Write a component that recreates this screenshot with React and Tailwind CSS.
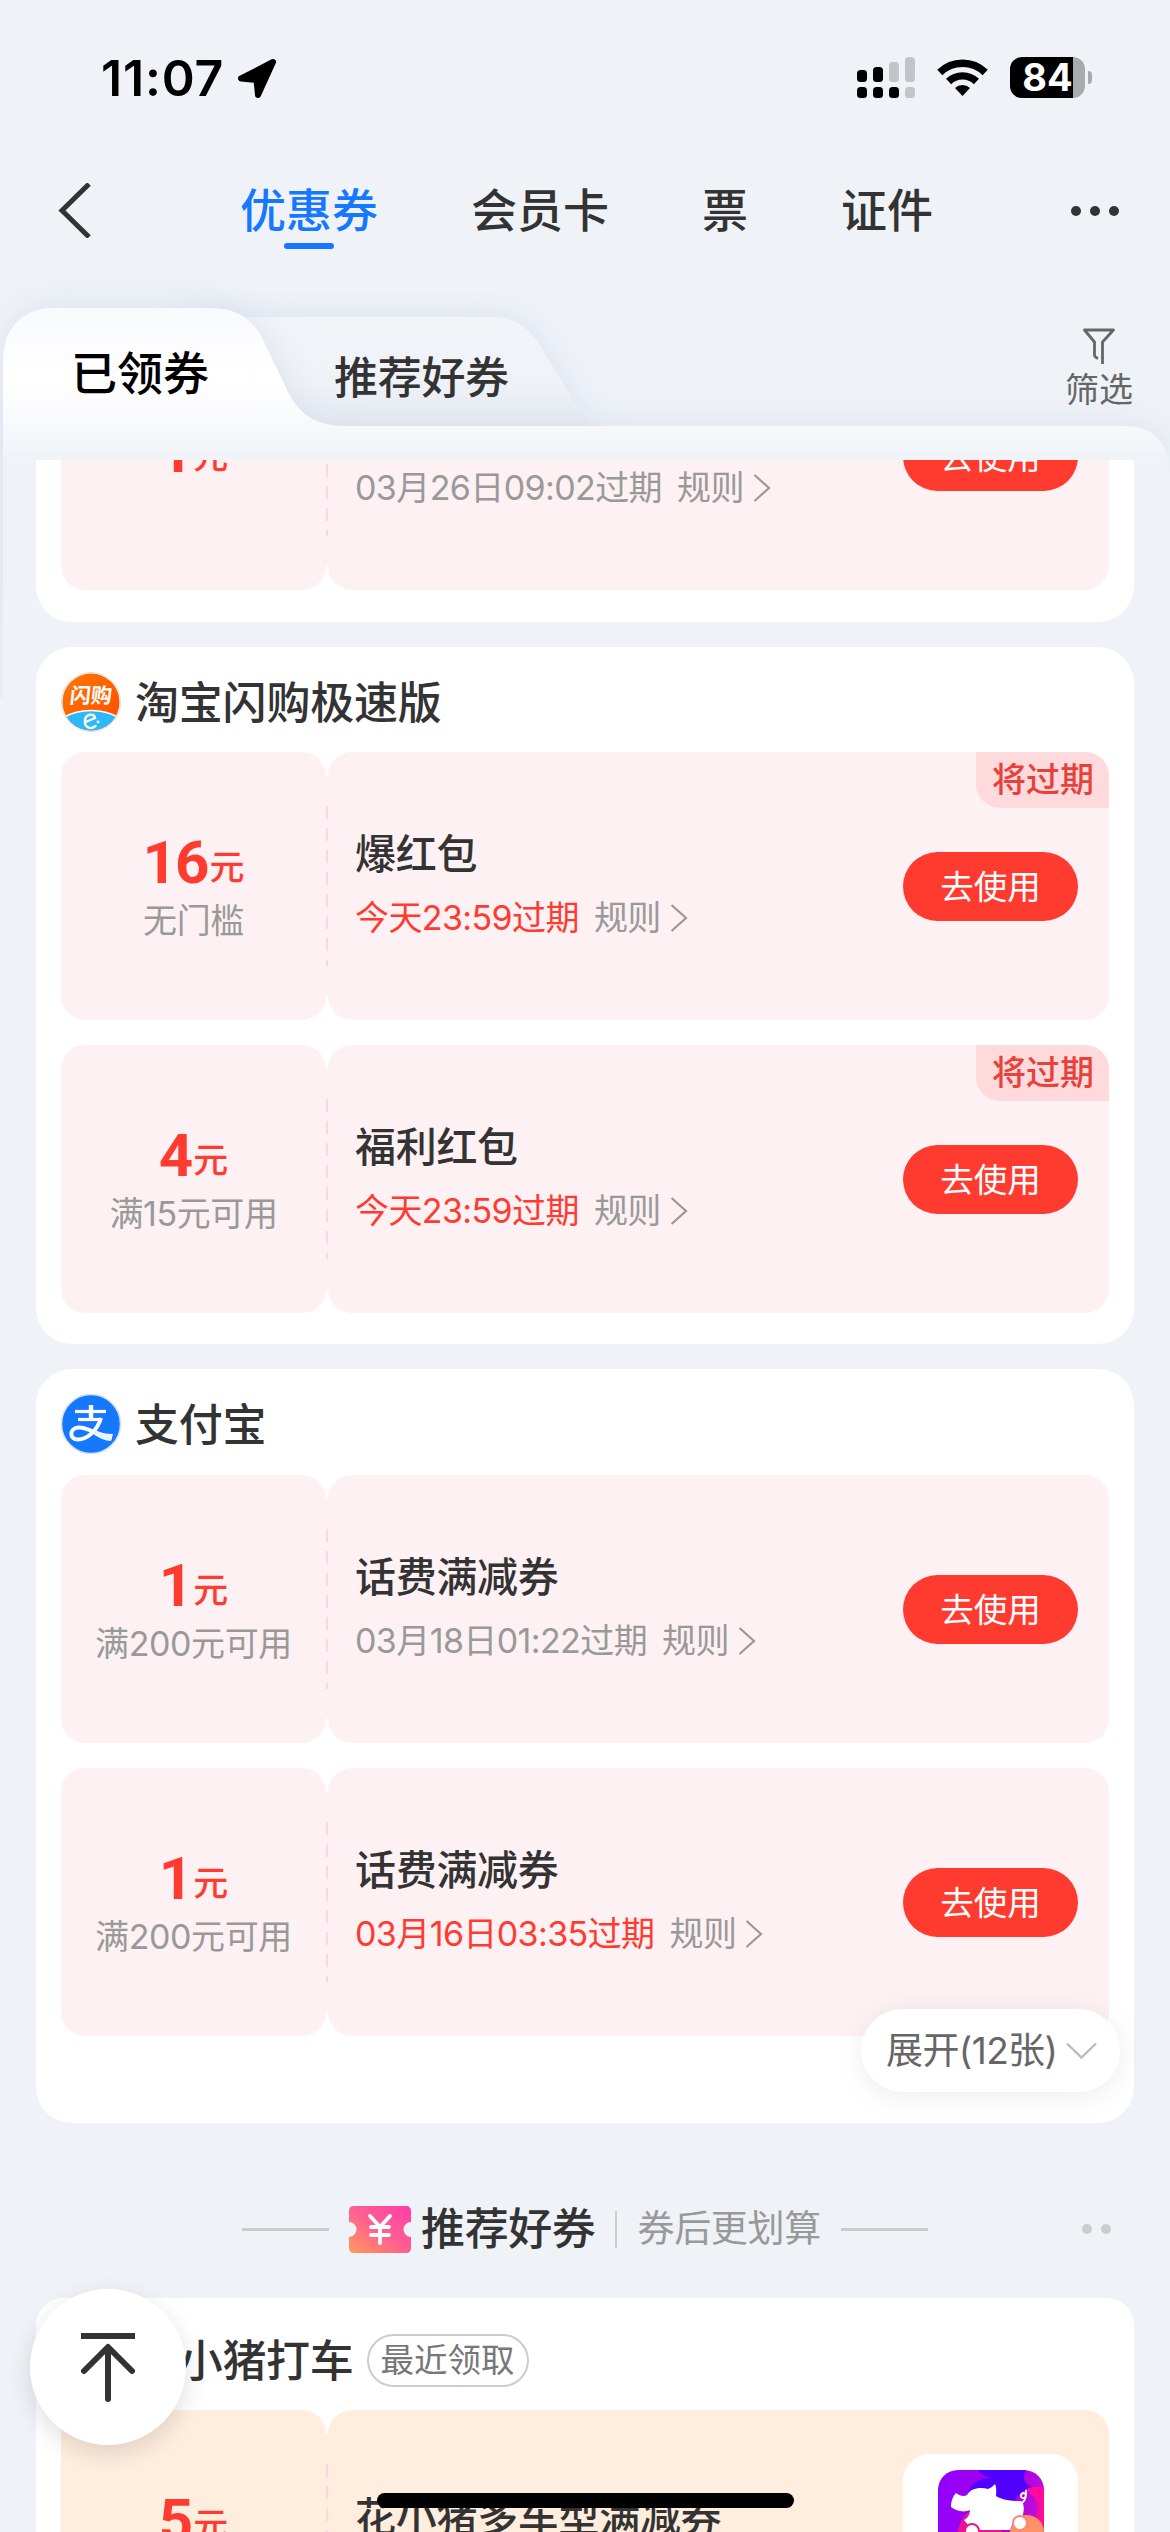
import React from "react";

const useFont = "font-['Inter','Noto_Sans_CJK_SC',sans-serif]";

const Chevron = ({ className }) => (
  <svg className={className} width="18" height="28" viewBox="0 0 18 28" fill="none">
    <path d="M1.5 1 L16 14 L1.5 27" stroke="currentColor" strokeWidth="2.2" />
  </svg>
);

const StatusBar = () => (
  <div className="h-[152px] shrink-0 flex items-start justify-between pl-[101px] pr-[78px] pt-[57px]">
    <div className="flex items-center h-[42px]">
      <span className="text-[50px] leading-[42px] font-semibold tracking-[0.8px] text-black">11:07</span>
      <svg className="ml-[13px]" width="40" height="41" viewBox="0 0 40 41">
        <path
          d="M36 4 L4 20.5 L19.5 22 L21 37 Z"
          fill="#000"
          stroke="#000"
          strokeWidth="6"
          strokeLinejoin="round"
        />
      </svg>
    </div>
    <div className="flex items-start">
      <svg width="58" height="42" viewBox="0 0 58 42">
        <rect x="0" y="13" width="10" height="12" rx="3.5" />
        <rect x="16" y="10" width="10" height="15" rx="3.5" />
        <rect x="32" y="5" width="10" height="20" rx="3.5" fill="#c1c4c8" />
        <rect x="48" y="0" width="10" height="25" rx="3.5" fill="#c1c4c8" />
        <rect x="0" y="30" width="10" height="11" rx="3.5" />
        <rect x="16" y="30" width="10" height="11" rx="3.5" />
        <rect x="32" y="30" width="10" height="11" rx="3.5" />
        <rect x="48" y="30" width="10" height="11" rx="3.5" fill="#c1c4c8" />
      </svg>
      <svg className="ml-[22px]" width="51" height="42" viewBox="0 0 51 42" fill="none">
        <path d="M2.8 15.5 A32.5 32.5 0 0 1 48.2 15.5" stroke="#000" strokeWidth="7.4" />
        <path d="M11.6 24.5 A20 20 0 0 1 39.4 24.5" stroke="#000" strokeWidth="7.4" />
        <path d="M25.5 39 L18 31 A10.8 10.8 0 0 1 33 31 Z" fill="#000" />
      </svg>
      <div className="ml-[22px] flex items-center">
        <div className="w-[75px] h-[41px] rounded-[12px] bg-[linear-gradient(90deg,#000_63px,#a9aaae_63px)] flex items-center justify-center">
          <span className="text-[38px] leading-[41px] font-bold text-white">84</span>
        </div>
        <div className="ml-[3px] w-1 h-[13px] rounded-r-full bg-[#a9aaae]" />
      </div>
    </div>
  </div>
);

const NavBar = () => (
  <div className="h-[156px] shrink-0 flex items-start pt-[26px] pl-[58px] text-[46px] leading-[64px] font-medium text-[#333]">
    <svg className="mt-[5px]" width="34" height="55" viewBox="0 0 34 55" fill="none">
      <path d="M31 1 L4 27.5 L31 54" stroke="#333" strokeWidth="5" />
    </svg>
    <div className="ml-[148px] flex flex-col items-center text-[#1677ff]">
      <span>优惠券</span>
      <div className="mt-[1px] w-[50px] h-[6px] rounded-full bg-[#1677ff]" />
    </div>
    <span className="ml-[93px]">会员卡</span>
    <span className="ml-[93px]">票</span>
    <span className="ml-[93px]">证件</span>
    <div className="ml-auto mr-[51px] h-[65px] flex items-center gap-[9px]">
      <i className="size-[10px] rounded-full bg-[#333]" />
      <i className="size-[10px] rounded-full bg-[#333]" />
      <i className="size-[10px] rounded-full bg-[#333]" />
    </div>
  </div>
);

// folder shaped background that sits behind the two tabs
const TabShape = () => (
  <svg className="absolute left-0 top-[-48px]" width="1170" height="450" viewBox="0 260 1170 450">
    <defs>
      <linearGradient id="front" gradientUnits="userSpaceOnUse" x1="0" y1="308" x2="0" y2="460">
        <stop offset="0" stopColor="#f9fafd" />
        <stop offset="0.5" stopColor="#ffffff" />
        <stop offset="0.75" stopColor="#f8f9fc" />
        <stop offset="1" stopColor="#eff3f8" />
      </linearGradient>
      <linearGradient id="back" gradientUnits="userSpaceOnUse" x1="0" y1="317" x2="0" y2="426">
        <stop offset="0" stopColor="#f2f4f8" />
        <stop offset="0.6" stopColor="#eff2f7" />
        <stop offset="1" stopColor="#e6eaf2" />
      </linearGradient>
      <linearGradient id="fade" gradientUnits="userSpaceOnUse" x1="0" y1="560" x2="0" y2="700">
        <stop offset="0" stopColor="#e3e8f2" />
        <stop offset="1" stopColor="#e9edf5" />
      </linearGradient>
      <linearGradient id="fadeRight" gradientUnits="userSpaceOnUse" x1="0" y1="440" x2="0" y2="480">
        <stop offset="0" stopColor="#eff3f8" stopOpacity="0" />
        <stop offset="1" stopColor="#eff3f8" />
      </linearGradient>
      <filter id="glow" x="-10%" y="-20%" width="120%" height="140%">
        <feDropShadow dx="0" dy="0" stdDeviation="18" floodColor="#d3daea" floodOpacity="0.75" />
      </filter>
    </defs>
    <path
      d="M180 317 H492 C516 317 531 330 541 347 L582 415 C586 421 590 426 598 430 H180 Z"
      fill="url(#back)"
      filter="url(#glow)"
    />
    <path
      d="M3 800 V362 C3 328 22 308 54 308 H210 C240 308 256 322 266 346 L289 394 C300 414 316 426 345 426 H1126 C1150 426 1166 440 1168 462 V800 Z"
      fill="url(#front)"
      filter="url(#glow)"
    />
    <rect x="0" y="400" width="3" height="298" fill="url(#fade)" />
    <rect x="0" y="698" width="4" height="20" fill="#eff3f8" />
    <rect x="1164" y="440" width="6" height="280" fill="url(#fadeRight)" />
  </svg>
);

const Tabs = () => (
  <div className="h-[152px] shrink-0 relative">
    <TabShape />
    <div className="relative flex items-start">
      <span className="ml-[71px] mt-[33px] text-[46px] leading-[64px] font-medium text-black">已领券</span>
      <span className="ml-[125px] mt-[38px] text-[44px] leading-[64px] font-medium text-[#333] tracking-[-0.3px]">
        推荐好券
      </span>
      <div className="ml-auto mr-[37px] mt-[19px] flex flex-col items-center text-[#666]">
        <svg width="34" height="38" viewBox="0 0 34 38" fill="none">
          <path
            d="M20.5 37 V15 L31.5 3 H2.5 L12.5 15 V28 C12.5 30 14 30.5 16 31.5"
            stroke="currentColor"
            strokeWidth="2.8"
            strokeLinejoin="round"
          />
        </svg>
        <span className="mt-[1px] text-[34px] leading-[48px]">筛选</span>
      </div>
    </div>
  </div>
);

const FlashLogo = () => (
  <svg width="60" height="60" viewBox="0 0 60 60">
    <defs>
      <linearGradient id="orange" x1="0" y1="0" x2="1" y2="1">
        <stop offset="0" stopColor="#ff7a00" />
        <stop offset="1" stopColor="#ff4a00" />
      </linearGradient>
      <clipPath id="round">
        <circle cx="30" cy="30" r="28.5" />
      </clipPath>
    </defs>
    <circle cx="30" cy="30" r="29.5" fill="#fff" stroke="#dcdcdc" />
    <g clipPath="url(#round)">
      <rect width="60" height="60" fill="url(#orange)" />
      <ellipse cx="30" cy="62" rx="38" ry="23.5" fill="#2db9f5" stroke="#fff" strokeWidth="1.5" />
      <text
        x="30"
        y="31"
        textAnchor="middle"
        fontSize="21"
        fontWeight="700"
        fill="#fff"
        fontFamily="Noto Sans CJK SC"
        transform="skewX(-6) translate(2.5 0)"
      >
        闪购
      </text>
      <path
        d="M26 49.5 L34 46 C33 41 25 41.5 24 48 C23 55 29 58.5 34.5 54"
        fill="none"
        stroke="#fff"
        strokeWidth="2.4"
        strokeLinecap="round"
      />
      <circle cx="37" cy="50" r="1.4" fill="#fff" />
    </g>
  </svg>
);

const AlipayLogo = () => (
  <svg width="60" height="60" viewBox="0 0 60 60" fill="none">
    <circle cx="30" cy="30" r="29.5" fill="#1677ff" stroke="#d3e0f3" strokeWidth="1.5" />
    <g stroke="#fff" strokeLinecap="butt">
      <path d="M14 17.5 H45" strokeWidth="3.2" />
      <path d="M30 11 V26" strokeWidth="4.4" />
      <path d="M17 25.5 H40" strokeWidth="3.2" />
      <path
        d="M40 24 C36 37 26 45.5 17 45.5 C8 45.5 8 34 17.5 33.5 C27 33 37 42 51 43.5"
        strokeWidth="4"
      />
    </g>
    <path d="M34 36 C40 39 46 40 52 40 L50 47 C44 47 38 44 32 40 Z" fill="#e9f2ff" />
  </svg>
);

const PigLogo = () => (
  <svg width="106" height="106" viewBox="0 0 106 106">
    <defs>
      <linearGradient id="pigBg" x1="0" y1="0" x2="1" y2="0.3">
        <stop offset="0" stopColor="#8f00ff" />
        <stop offset="0.7" stopColor="#a800e0" />
        <stop offset="1" stopColor="#c010d8" />
      </linearGradient>
      <clipPath id="pigClip">
        <rect width="106" height="106" rx="20" />
      </clipPath>
    </defs>
    <g clipPath="url(#pigClip)">
      <rect width="106" height="106" fill="url(#pigBg)" />
      <path d="M86 20 C92 16 100 16 106 18 V62 L92 56 C104 42 102 26 86 20 Z" fill="#ff0a9c" />
      <path d="M40 0 H88 C84 8 86 14 94 17 C84 20 80 24 76 32 L60 34 L30 24 C32 12 44 8 54 8 C48 7 43 4 40 0 Z" fill="#4f00ff" />
      <path d="M16 106 C16 60 22 46 34 40 L60 50 L80 106 Z" fill="#e8129a" />
      <path d="M66 106 C66 58 78 45 88 45 C98 45 106 52 106 62 V106 Z" fill="#ff9068" />
      <path
        d="M18 23 C22 26 26 27 29 25 C33 18 42 17 50 19 C53 18 55 16 57 14 C59 19 58 23 58 26 C66 31 76 31 83 31 C87 34 86 42 84 48 L76 50 L72 60 H34 L26 50 C30 48 32 44 32 40 C26 43 18 41 13 37 C13 31 15 26 18 23 Z"
        fill="#fff"
      />
      <path d="M84 33 C88 30 89 24 86 23 C82 23 82 29 86 28 C89 27 88 22 88 20" fill="none" stroke="#fff" strokeWidth="1.8" />
      <circle cx="82" cy="53" r="7" fill="#fff" stroke="#ff8a70" strokeWidth="2" />
      <circle cx="34" cy="61" r="7" fill="#fff" stroke="#f0128f" strokeWidth="2" />
    </g>
  </svg>
);

const UseButton = () => (
  <button className="w-[175px] h-[69px] rounded-full bg-[#ff3b30] text-white text-[33.5px] leading-[70px]">
    去使用
  </button>
);

const Coupon = ({ amount, limit, title, expire, urgent, tag, tone = "pink", action }) => {
  const bg = tone === "pink" ? "bg-[#fef1f3]" : "bg-[#ffeede]";
  return (
    <div className="relative flex h-[268px] shrink-0">
      <div
        className={`w-[265px] rounded-[24px] flex flex-col items-center justify-center ${
          limit ? "pt-[5px]" : "pb-[9px]"
        } ${bg}`}
      >
        <div className="flex items-baseline text-[#ff3b30] h-[60px] leading-[60px]">
          <span className="text-[60px] font-bold font-['Roboto'] tracking-[-2px]">{amount}</span>
          <span className="relative -top-[3px] ml-[2px] text-[35px] font-medium">元</span>
        </div>
        {limit && (
          <span className="mt-[4px] text-[34px] leading-[48px] tracking-[-0.4px] text-[#999]">{limit}</span>
        )}
      </div>
      <div className={`w-[2px] my-[24px] py-[30px] ${bg}`}>
        <div className="h-full bg-[repeating-linear-gradient(180deg,#ffd6df_0_13px,transparent_13px_22px)]" />
      </div>
      <div className={`flex-1 rounded-[24px] flex items-center pl-[27px] pr-[31px] ${bg}`}>
        <div className={tone === "pink" ? "flex-1 pb-[5px]" : "flex-1 pt-[6px]"}>
          <div className="h-[60px] text-[41px] leading-[60px] tracking-[-0.3px] font-medium text-[#333]">{title}</div>
          <div className="mt-[8px] flex items-center text-[34px] leading-[52px] tracking-[-0.6px] text-[#999]">
            <span className={urgent ? "text-[#ff3b30]" : ""}>{expire}</span>
            <span className="ml-[15px]">规则</span>
            <Chevron className="ml-[9px]" />
          </div>
        </div>
        {action || <UseButton />}
      </div>
      {tag && (
        <div className="absolute right-0 top-0 h-[56px] pl-[16px] pr-[15px] rounded-tr-[24px] rounded-bl-[24px] bg-[#ffdadd] text-[#e8413a] text-[34px] leading-[56px] font-medium">
          {tag}
        </div>
      )}
    </div>
  );
};

const CardTitle = ({ logo, children }) => (
  <div className="h-[106px] shrink-0 flex items-start pt-[25px]">
    {logo}
    <span className="ml-[14px] text-[44px] leading-[62px] tracking-[-0.2px] font-medium text-[#333]">{children}</span>
  </div>
);

const Line = () => <div className="w-[87px] h-[3px] bg-[#ccc]" />;

const RecommendTitle = () => (
  <div className="relative h-[175px] pt-[74px] flex items-start justify-center">
    <div className="h-[64px] flex items-center">
      <Line />
      <svg className="ml-[20px]" width="62" height="47" viewBox="0 0 62 47">
        <defs>
          <linearGradient id="ticket" x1="0" y1="1" x2="1" y2="0">
            <stop offset="0" stopColor="#ff9a5a" />
            <stop offset="0.5" stopColor="#ff5f8f" />
            <stop offset="1" stopColor="#ff3cae" />
          </linearGradient>
        </defs>
        <path
          d="M5 0 H57 Q62 0 62 5 V16 A7.5 7.5 0 0 0 62 31 V42 Q62 47 57 47 H5 Q0 47 0 42 V31 A7.5 7.5 0 0 0 0 16 V5 Q0 0 5 0 Z"
          fill="url(#ticket)"
        />
        <path
          d="M21 10 L31 21 L41 10 M31 21 V37 M22 21 H40 M22 29 H40"
          fill="none"
          stroke="#fff"
          strokeWidth="3.8"
          strokeLinecap="round"
        />
      </svg>
      <span className="ml-[10px] text-[44px] leading-[64px] tracking-[-0.4px] font-medium text-[#333]">推荐好券</span>
      <div className="ml-[20px] w-[2px] h-[37px] bg-[#ccc]" />
      <span className="mx-[20px] text-[37px] leading-[66px] tracking-[-0.3px] text-[#999]">券后更划算</span>
      <Line />
    </div>
    <div className="absolute right-[23px] top-[101px] flex gap-[9px]">
      <i className="size-[10px] rounded-full bg-[#ccc]" />
      <i className="size-[10px] rounded-full bg-[#ccc]" />
    </div>
  </div>
);

const App = () => {
  return (
    <div className={`relative w-[1170px] h-[2532px] overflow-hidden flex flex-col bg-[#eff3f8] ${useFont}`}>
      <StatusBar />
      <NavBar />
      <Tabs />

      <main className="relative flex-1 min-h-0 overflow-hidden px-9">
        <section className="-mt-[138px] rounded-[36px] bg-white px-[25px] pb-8">
          <Coupon amount="1" expire="03月26日09:02过期" />
        </section>

        <section className="mt-[25px] rounded-[36px] bg-white px-[25px] pb-[31px]">
          <CardTitle logo={<FlashLogo />}>淘宝闪购极速版</CardTitle>
          <div className="-mt-px flex flex-col gap-[25px]">
            <Coupon amount="16" limit="无门槛" title="爆红包" expire="今天23:59过期" urgent tag="将过期" />
            <Coupon amount="4" limit="满15元可用" title="福利红包" expire="今天23:59过期" urgent tag="将过期" />
          </div>
        </section>

        <section className="relative mt-[25px] rounded-[36px] bg-white px-[25px] pb-[87px]">
          <CardTitle logo={<AlipayLogo />}>支付宝</CardTitle>
          <div className="flex flex-col gap-[25px]">
            <Coupon amount="1" limit="满200元可用" title="话费满减券" expire="03月18日01:22过期" />
            <Coupon amount="1" limit="满200元可用" title="话费满减券" expire="03月16日03:35过期" urgent />
          </div>
          <button className="absolute right-[14px] bottom-[31px] w-[259px] h-[83px] rounded-full bg-white shadow-[0_4px_28px_rgba(0,0,0,0.08)] flex items-center pl-[25px] text-[37px] tracking-[-0.6px] text-[#666]">
            展开(12张)
            <svg className="ml-[9px]" width="31" height="18" viewBox="0 0 31 18" fill="none">
              <path d="M1 1.5 L15.5 15.5 L30 1.5" stroke="#bbb" strokeWidth="2.4" />
            </svg>
          </button>
        </section>

        <RecommendTitle />

        <section className="rounded-[27px] bg-white px-[25px]">
          <div className="h-[112px] flex items-start pt-[33px]">
            <span className="ml-[74px] text-[44px] leading-[60px] tracking-[-0.3px] font-medium text-[#333]">
              花小猪打车
            </span>
            <span className="ml-[13px] mt-[3px] w-[162px] h-[53px] rounded-full border-2 border-[#ccc] text-[33.5px] leading-[48px] text-center text-[#777]">
              最近领取
            </span>
          </div>
          <Coupon
            tone="orange"
            amount="5"
            limit="无门槛"
            title="花小猪多车型满减券"
            expire="今天23:59过期"
            action={
              <div className="w-[175px] h-[180px] rounded-[27px] bg-white flex justify-center pt-4">
                <PigLogo />
              </div>
            }
          />
        </section>
      </main>

      <button className="absolute left-[30px] top-[2289px] size-[156px] rounded-full bg-white shadow-[0_8px_24px_rgba(0,0,0,0.13)] flex items-start justify-center pt-[43px]">
        <svg width="56" height="72" viewBox="0 0 56 72" fill="none" stroke="#333">
          <path d="M1 4 H55" strokeWidth="6" />
          <path d="M28 16 V67" strokeWidth="6" strokeLinecap="round" />
          <path d="M4 39 L28 15 L52 39" strokeWidth="6" strokeLinecap="round" strokeLinejoin="round" />
        </svg>
      </button>
      <div className="absolute left-[377px] top-[2493px] w-[417px] h-[15px] rounded-full bg-black" />
    </div>
  );
};

export default App;
